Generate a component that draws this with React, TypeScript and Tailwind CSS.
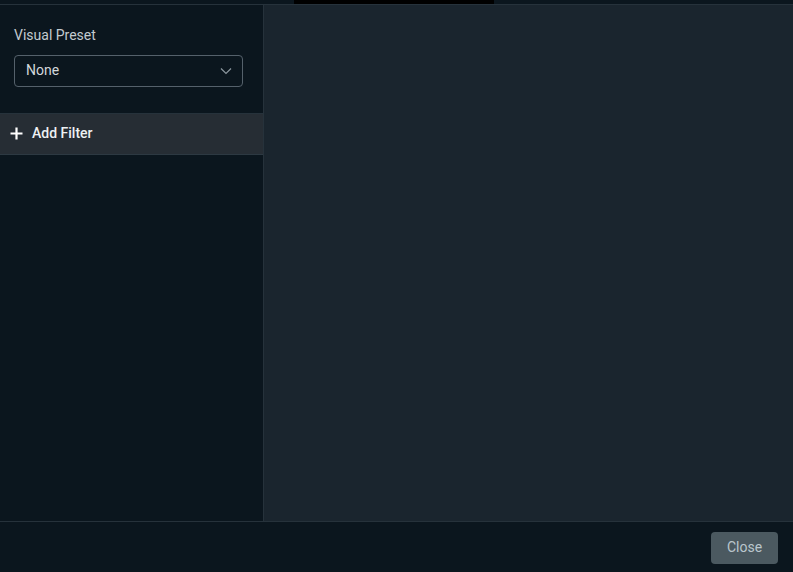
import React from "react";

export default function App() {
  return (
    <div
      className="w-[793px] h-[572px] flex flex-col bg-[#0b161e] overflow-hidden"
      style={{ fontFamily: "Roboto, 'Liberation Sans', sans-serif" }}
    >
      <div className="h-[4px] flex shrink-0">
        <div className="w-[294px]" />
        <div className="w-[200px] bg-black" />
      </div>
      <div className="flex flex-1 min-h-0 border-t border-[#26323b]">
        <div className="w-[264px] shrink-0 border-r border-[#26323b] flex flex-col">
          <div className="px-[14px] pt-[21px] pb-[26px] border-b border-[#26323b]">
            <div className="text-[14px] leading-[18px] text-[#c3cad0] mb-[11px]">Visual Preset</div>
            <div className="h-[32px] w-[229px] border border-[#55616b] rounded-[4px] flex items-center justify-between pl-[11px] pr-[10px]">
              <span className="text-[14px] text-[#d3d8dc] -mt-[2px]">None</span>
              <svg width="12" height="8" viewBox="0 0 12 8" fill="none">
                <path d="M1 1.5L6 6.5L11 1.5" stroke="#8b969e" strokeWidth="1.2" />
              </svg>
            </div>
          </div>
          <div className="h-[41px] bg-[#262d34] border-b border-[#2d3942] flex items-center pl-[10px] gap-[9px]">
            <svg width="13" height="13" viewBox="0 0 13 13" className="-mt-[2px]">
              <path d="M6.5 0.5V12.5M0.5 6.5H12.5" stroke="#ffffff" strokeWidth="2.2" />
            </svg>
            <span className="text-[14px] font-medium text-[#eef1f3] -mt-[1px]">Add Filter</span>
          </div>
        </div>
        <div className="flex-1 bg-[#1a252e]" />
      </div>
      <div className="h-[51px] shrink-0 border-t border-[#26323b] flex items-start justify-end pr-[15px] pt-[10px]">
        <button className="h-[32px] w-[67px] rounded-[4px] bg-[#4b5960] text-[14px] text-[#bac6cc] pb-[2px]">
          Close
        </button>
      </div>
    </div>
  );
}
